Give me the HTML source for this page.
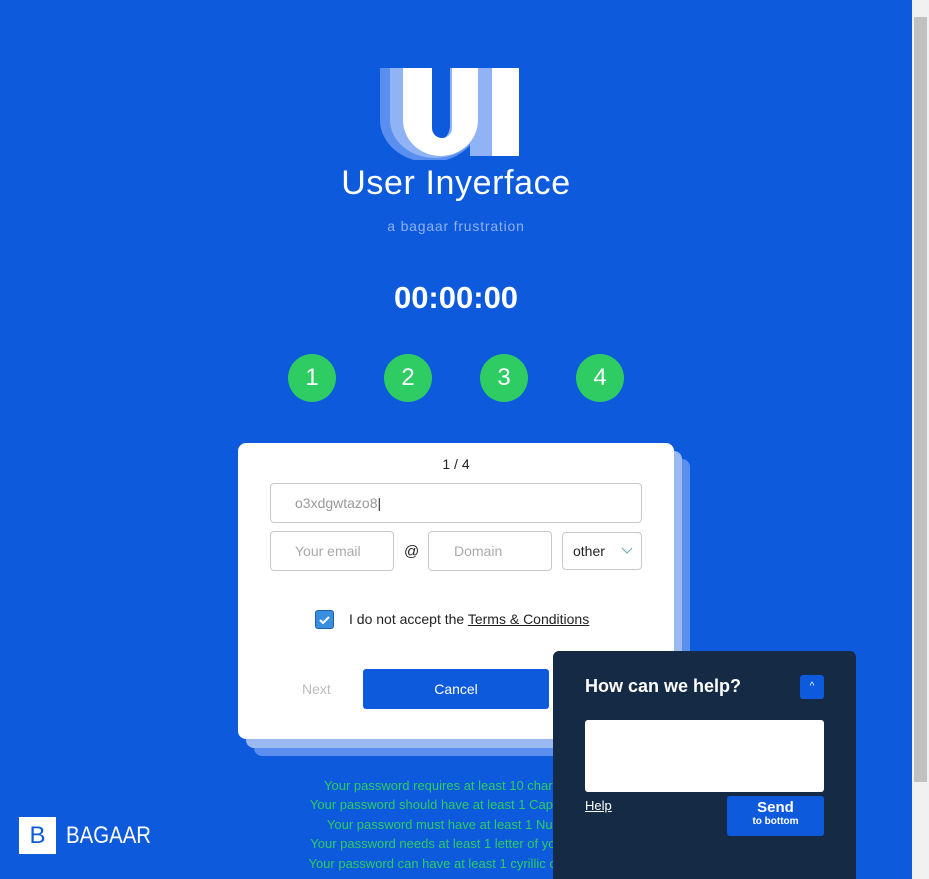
<!DOCTYPE html>
<html style="height:879px;overflow:hidden"><head><style>
body{margin:0;width:929px;height:879px;background:#0d5add;font-family:"Liberation Sans",sans-serif;overflow:hidden;position:relative}
.abs{position:absolute}
.sb{left:912px;top:0;width:17px;height:879px;background:#f1f1f1}
.thumb{left:914px;top:17px;width:13px;height:765px;background:#c1c1c1}
.circ{width:48px;height:48px;border-radius:50%;background:#2ecc62;color:#fff;font-size:24px;text-align:center;line-height:48px;top:354px}
.inp{border:1px solid #c8c8c8;border-radius:4px;height:38px;box-sizing:border-box;color:#aaa;font-size:14px;line-height:36px}
.pw{color:#2ecc62;font-size:13px;width:400px;text-align:center;left:256px}
</style></head><body>
<svg class="abs" style="left:378px;top:66px" width="145" height="94">
<g fill="#5a8ff0"><path d="M2 2h30v58a20 20 0 0 0 40 0V2h30v52a45 38 0 0 1-100 0z"/></g>
<g fill="#8fb3f5"><path d="M12 2h28v58a16 16 0 0 0 32 0V2h30v52a45 38 0 0 1-90 0z"/><rect x="92" y="2" width="22" height="88"/></g>
<g fill="#fff"><path d="M25 2h29v60a10 10 0 0 0 20 0V2h26v52a37.5 36 0 0 1-75 0z"/><rect x="114" y="2" width="27" height="88"/></g>
</svg>
<div class="abs" style="left:0;width:912px;top:164px;text-align:center;color:#fff;font-size:34px;letter-spacing:0.6px">User Inyerface</div>
<div class="abs" style="left:0;width:912px;top:218px;text-align:center;color:#8fb0ee;font-size:14px;letter-spacing:0.8px">a bagaar frustration</div>
<div class="abs" style="left:0;width:912px;top:280px;text-align:center;color:#fff;font-size:31px;font-weight:bold">00:00:00</div>
<div class="abs circ" style="left:288px">1</div>
<div class="abs circ" style="left:384px">2</div>
<div class="abs circ" style="left:480px">3</div>
<div class="abs circ" style="left:576px">4</div>
<div class="abs" style="left:254px;top:459px;width:436px;height:297px;background:#5a8ff0;border-radius:8px"></div>
<div class="abs" style="left:246px;top:451px;width:436px;height:297px;background:#9ab9f0;border-radius:8px"></div>
<div class="abs" style="left:238px;top:443px;width:436px;height:296px;background:#fff;border-radius:8px">
<div class="abs" style="left:0;width:436px;top:13px;text-align:center;font-size:14px;color:#222">1 / 4</div>
<div class="abs inp" style="left:32px;top:40px;width:372px;height:40px;line-height:38px;padding-left:24px;color:#999">o3xdgwtazo8<span style="color:#333">|</span></div>
<div class="abs inp" style="left:32px;top:88px;width:124px;height:40px;line-height:38px;padding-left:24px">Your email</div>
<div class="abs" style="left:166px;top:100px;font-size:15px;color:#222">@</div>
<div class="abs inp" style="left:190px;top:88px;width:124px;height:40px;line-height:38px;padding-left:25px">Domain</div>
<div class="abs inp" style="left:324px;top:89px;width:80px;height:38px;padding-left:10px;color:#222">other<svg class="abs" style="left:58px;top:14px" width="12" height="8"><path d="M1 1l5 5 5-5" fill="none" stroke="#6aa" stroke-width="1"/></svg></div>
<div class="abs" style="left:77px;top:167px;width:17px;height:17px;background:#3a8ee0;border:1px solid #1f5fa8;border-radius:3px"><svg width="17" height="17"><path d="M4 9l3 3 6-6" fill="none" stroke="#fff" stroke-width="2"/></svg></div>
<div class="abs" style="left:111px;top:168px;font-size:14px;color:#222">I do not accept the <u>Terms &amp; Conditions</u></div>
<div class="abs" style="left:64px;top:238px;font-size:14px;color:#bbb">Next</div>
<div class="abs" style="left:125px;top:226px;width:186px;height:40px;background:#0d5add;border-radius:3px;color:#fff;font-size:14px;text-align:center;line-height:40px">Cancel</div>
</div>
<div class="abs pw" style="top:778px">Your password requires at least 10 characters</div>
<div class="abs pw" style="top:797px">Your password should have at least 1 Capital letter</div>
<div class="abs pw" style="top:817px">Your password must have at least 1 Numeral</div>
<div class="abs pw" style="top:836px">Your password needs at least 1 letter of your email</div>
<div class="abs pw" style="top:856px">Your password can have at least 1 cyrillic character</div>
<div class="abs" style="left:19px;top:817px;width:37px;height:37px;background:#fff;color:#0d5add;font-size:24px;text-align:center;line-height:37px">B</div>
<div class="abs" style="left:66px;top:822px;color:#fff;font-size:24px;transform:scaleX(0.85);transform-origin:left">BAGAAR</div>
<div class="abs" style="left:553px;top:651px;width:303px;height:228px;background:#152a45;border-radius:6px 6px 0 0">
<div class="abs" style="left:32px;top:25px;color:#fff;font-size:18px;font-weight:bold">How can we help?</div>
<div class="abs" style="left:247px;top:24px;width:24px;height:24px;background:#0d5add;border-radius:3px;color:#fff;font-size:10px;text-align:center;line-height:24px">^</div>
<div class="abs" style="left:32px;top:69px;width:239px;height:72px;background:#fff;border-radius:3px"></div>
<div class="abs" style="left:32px;top:147px;color:#fff;font-size:13px;text-decoration:underline">Help</div>
<div class="abs" style="left:174px;top:145px;width:97px;height:40px;background:#0d5add;border-radius:3px;color:#fff;text-align:center;font-weight:bold"><div style="font-size:15px;margin-top:3px">Send</div><div style="font-size:10px">to bottom</div></div>
</div>
<div class="abs sb"></div><div class="abs thumb"></div>
</body></html>
